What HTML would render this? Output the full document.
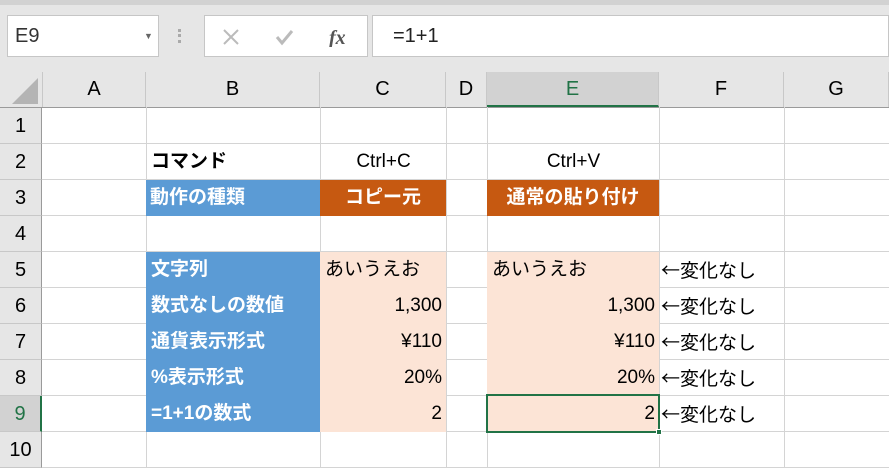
<!DOCTYPE html>
<html><head><meta charset="utf-8"><style>
*{margin:0;padding:0;box-sizing:border-box}
body{width:889px;height:468px;overflow:hidden;background:#e6e6e6;font-family:"Liberation Sans","Noto Sans CJK JP",sans-serif;position:relative}
.a{position:absolute}
.c{position:absolute;height:36px;line-height:36px;font-size:19px;color:#000;white-space:nowrap;padding:0 4px}
.r{text-align:right}.m{text-align:center}
.w{color:#fff;font-weight:bold}
.bl{background:#5b9bd5}.or{background:#c65911}.pk{background:#fce4d6}
.hd{position:absolute;top:72px;height:35px;line-height:35px;text-align:center;font-size:20px;border-right:1px solid #c8c8c8}
.rh{position:absolute;left:0;width:42px;height:36px;line-height:36px;text-align:center;font-size:20px;border-bottom:1px solid #c8c8c8;border-right:1px solid #9a9a9a;background:#e6e6e6}
.ar{font-family:"Noto Sans CJK JP",sans-serif}
</style></head><body>
<div class="a" style="left:0;top:0;width:889px;height:5px;background:#d2d2d2"></div>
<div class="a" style="left:7px;top:15px;width:152px;height:42px;background:#fff;border:1px solid #c6c6c6;font-size:20px;line-height:40px;padding-left:7px;color:#333">E9<span class="a" style="left:136px;top:0;font-size:9px;color:#666">▼</span></div>
<div class="a" style="left:178px;top:29px;width:3px;height:14px;border-left:3px dotted #aaa"></div>
<div class="a" style="left:204px;top:15px;width:164px;height:42px;background:#fff;border:1px solid #c6c6c6"></div>
<svg class="a" style="left:222px;top:27px" width="130" height="20"><path d="M2 3L16 17M16 3L2 17" stroke="#bbb" stroke-width="2"/><path d="M55 10l5 6 10-12" stroke="#bbb" stroke-width="3" fill="none"/><text x="107" y="17" font-family="Liberation Serif" font-style="italic" font-weight="bold" font-size="20" fill="#555">fx</text></svg>
<div class="a" style="left:372px;top:15px;width:517px;height:42px;background:#fff;border:1px solid #c6c6c6;font-size:20px;line-height:40px;padding-left:20px;color:#222">=1+1</div>
<div class="a" style="left:42px;top:107px;width:847px;height:361px;background:#fff"></div>
<svg class="a" style="left:0;top:72px" width="42" height="35"><path d="M12 32L38 32L38 6Z" fill="#b4b4b4"/></svg>
<div class="a" style="left:0;top:107px;width:889px;height:1px;background:#9a9a9a"></div>
<div class="hd" style="left:42px;width:104px;border-left:1px solid #c8c8c8">A</div>
<div class="hd" style="left:146px;width:174px">B</div>
<div class="hd" style="left:320px;width:126px">C</div>
<div class="hd" style="left:446px;width:41px">D</div>
<div class="hd" style="left:487px;width:172px;background:#d2d2d2;color:#217346;border-bottom:2px solid #217346">E</div>
<div class="hd" style="left:659px;width:125px">F</div>
<div class="hd" style="left:784px;width:105px">G</div>
<div class="a" style="left:146px;top:107px;width:1px;height:361px;background:#d4d4d4"></div>
<div class="a" style="left:320px;top:107px;width:1px;height:361px;background:#d4d4d4"></div>
<div class="a" style="left:446px;top:107px;width:1px;height:361px;background:#d4d4d4"></div>
<div class="a" style="left:487px;top:107px;width:1px;height:361px;background:#d4d4d4"></div>
<div class="a" style="left:659px;top:107px;width:1px;height:361px;background:#d4d4d4"></div>
<div class="a" style="left:784px;top:107px;width:1px;height:361px;background:#d4d4d4"></div>
<div class="a" style="left:42px;top:143px;width:847px;height:1px;background:#d4d4d4"></div>
<div class="a" style="left:42px;top:179px;width:847px;height:1px;background:#d4d4d4"></div>
<div class="a" style="left:42px;top:215px;width:847px;height:1px;background:#d4d4d4"></div>
<div class="a" style="left:42px;top:251px;width:847px;height:1px;background:#d4d4d4"></div>
<div class="a" style="left:42px;top:287px;width:847px;height:1px;background:#d4d4d4"></div>
<div class="a" style="left:42px;top:323px;width:847px;height:1px;background:#d4d4d4"></div>
<div class="a" style="left:42px;top:359px;width:847px;height:1px;background:#d4d4d4"></div>
<div class="a" style="left:42px;top:395px;width:847px;height:1px;background:#d4d4d4"></div>
<div class="a" style="left:42px;top:431px;width:847px;height:1px;background:#d4d4d4"></div>
<div class="a" style="left:42px;top:467px;width:847px;height:1px;background:#d4d4d4"></div>
<div class="rh" style="top:108px">1</div><div class="rh" style="top:144px">2</div><div class="rh" style="top:180px">3</div><div class="rh" style="top:216px">4</div><div class="rh" style="top:252px">5</div><div class="rh" style="top:288px">6</div><div class="rh" style="top:324px">7</div><div class="rh" style="top:360px">8</div>
<div class="rh" style="top:396px;background:#d2d2d2;color:#217346;border-right:2px solid #217346">9</div><div class="rh" style="top:432px">10</div>
<div class="c w" style="left:147px;top:144px;width:173px;color:#000">コマンド</div>
<div class="c m" style="left:321px;top:144px;width:125px">Ctrl+C</div>
<div class="c m" style="left:488px;top:144px;width:171px">Ctrl+V</div>
<div class="c w bl" style="left:146px;top:180px;width:174px">動作の種類</div>
<div class="c w or m" style="left:320px;top:180px;width:126px">コピー元</div>
<div class="c w or m" style="left:487px;top:180px;width:172px">通常の貼り付け</div>
<div class="c w bl" style="left:146px;top:252px;width:174px;height:180px;line-height:normal;padding:0"></div>
<div class="c w" style="left:147px;top:252px">文字列</div>
<div class="c w" style="left:147px;top:288px">数式なしの数値</div>
<div class="c w" style="left:147px;top:324px">通貨表示形式</div>
<div class="c w" style="left:147px;top:360px">%表示形式</div>
<div class="c w" style="left:147px;top:396px">=1+1の数式</div>
<div class="a pk" style="left:320px;top:252px;width:126px;height:180px"></div>
<div class="a pk" style="left:487px;top:252px;width:172px;height:180px"></div>
<div class="c" style="left:321px;top:252px">あいうえお</div>
<div class="c r" style="left:320px;top:288px;width:126px">1,300</div>
<div class="c r" style="left:320px;top:324px;width:126px">¥110</div>
<div class="c r" style="left:320px;top:360px;width:126px">20%</div>
<div class="c r" style="left:320px;top:396px;width:126px">2</div>
<div class="c" style="left:488px;top:252px">あいうえお</div>
<div class="c r" style="left:487px;top:288px;width:172px">1,300</div>
<div class="c r" style="left:487px;top:324px;width:172px">¥110</div>
<div class="c r" style="left:487px;top:360px;width:172px">20%</div>
<div class="c r" style="left:487px;top:396px;width:172px">2</div>
<div class="a" style="left:486px;top:394px;width:174px;height:39px;border:2px solid #217346"></div>
<div class="a" style="left:656px;top:429px;width:6px;height:6px;background:#217346;border:1px solid #fff"></div>
<div class="c" style="left:659px;top:252px;padding:0 2px"><span class="ar">←</span>変化なし</div>
<div class="c" style="left:659px;top:288px;padding:0 2px"><span class="ar">←</span>変化なし</div>
<div class="c" style="left:659px;top:324px;padding:0 2px"><span class="ar">←</span>変化なし</div>
<div class="c" style="left:659px;top:360px;padding:0 2px"><span class="ar">←</span>変化なし</div>
<div class="c" style="left:659px;top:396px;padding:0 2px"><span class="ar">←</span>変化なし</div>
</body></html>
